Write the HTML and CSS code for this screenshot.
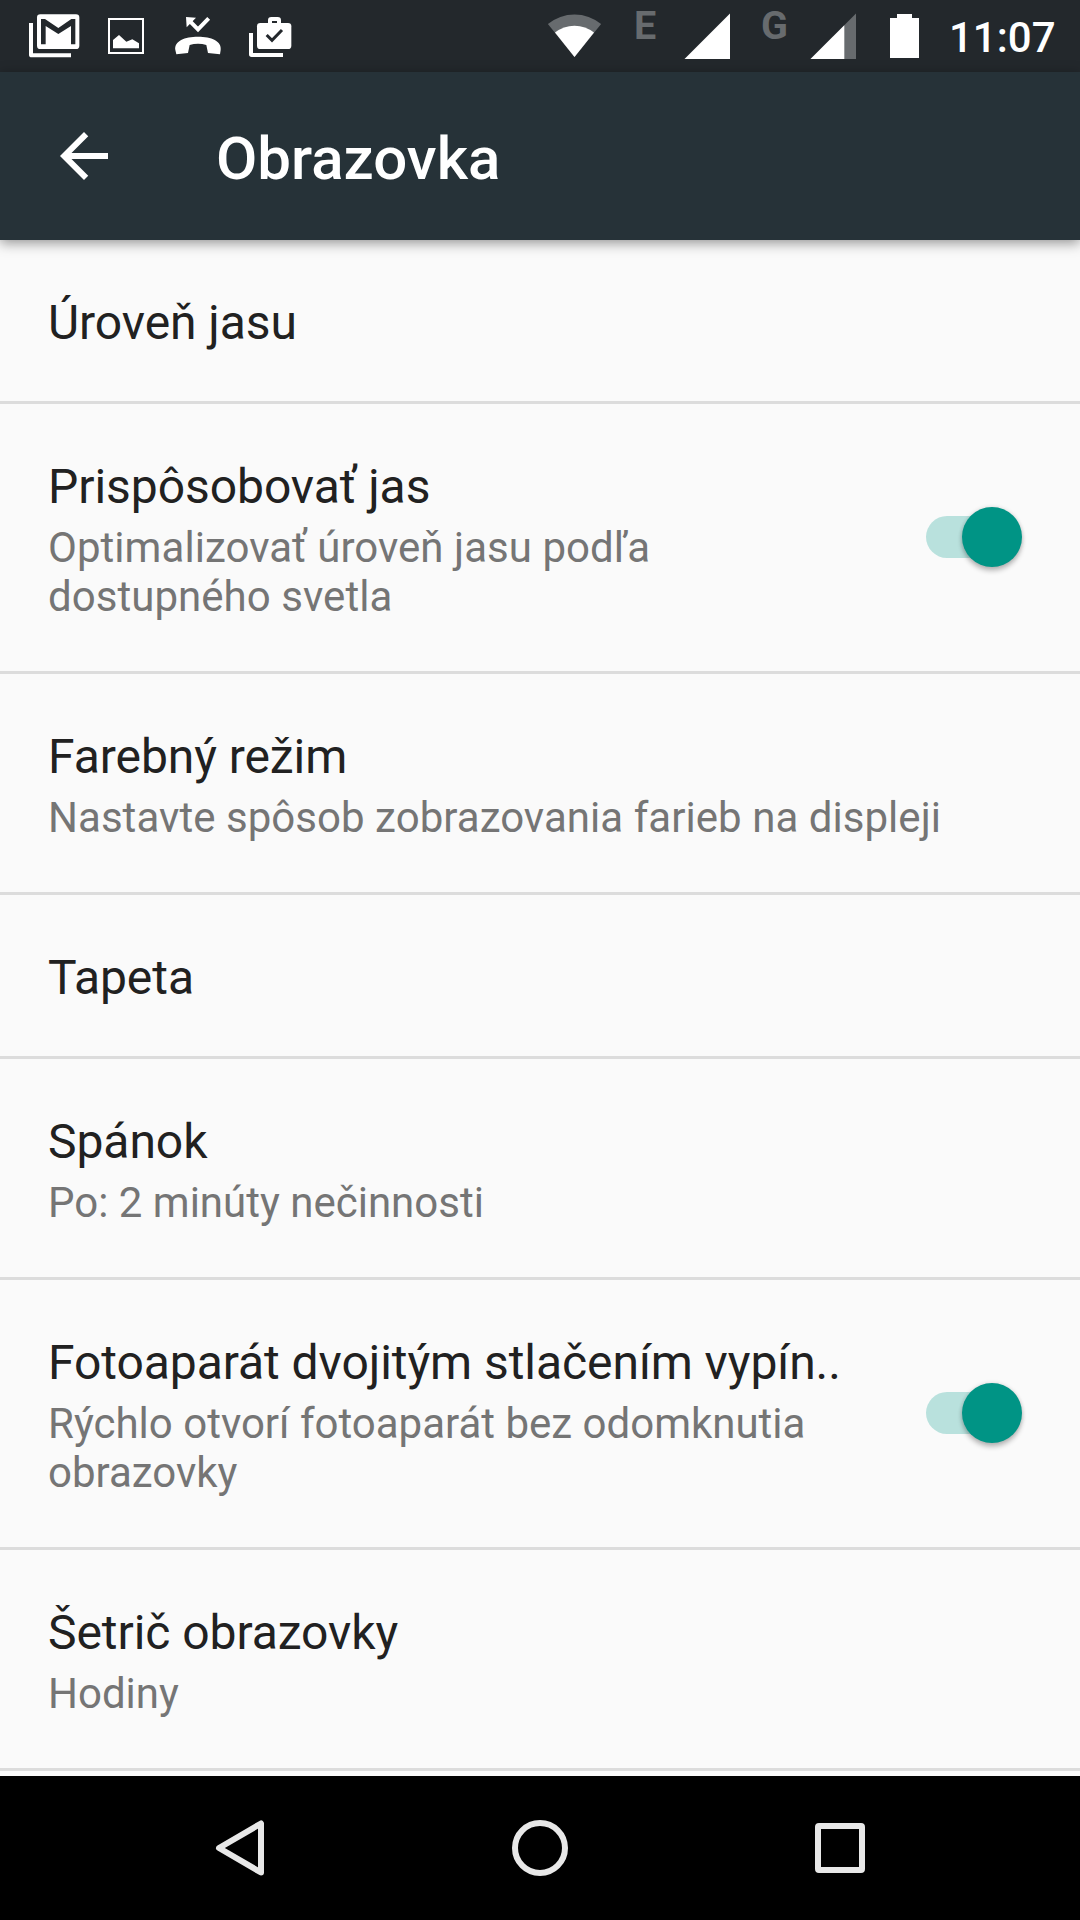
FILE: index.html
```html
<!DOCTYPE html>
<html lang="sk">
<head>
<meta charset="utf-8">
<title>Obrazovka</title>
<link rel="stylesheet" href="styles.css">
</head>
<body>
<header class="status">
  <div class="notifications">
    <svg class="note" viewBox="72 0 180 216"><path fill="#fff" d="M87 69h12v91h114v12H95q-8 0-8-8z"/><rect x="111" y="43" width="127" height="104" rx="10" fill="#fff"/><path fill="#23282c" d="M123 57h12l40 27 39-27h12v76h-13V78l-38 24-38-24v55h-14z"/></svg>
    <svg class="note" viewBox="288 0 180 216"><rect x="327" y="57" width="102" height="102" fill="none" stroke="#fff" stroke-width="6"/><path fill="#fff" d="M339 120l18-15 22 20 18-7 20 12v15h-78z"/></svg>
    <svg class="note" viewBox="504 0 180 216"><path fill="none" stroke="#fff" stroke-width="12" d="M568 62l26 26 32-33"/><path fill="#fff" d="M558 51l30 2-28 29zM526 150c-4-27 28-40 68-40s72 13 68 40l-2 13-36-4-5-24c-16-5-34-5-50 0l-5 24-35 4z"/></svg>
    <svg class="note" viewBox="720 0 180 216"><path fill="#fff" d="M747 99h12v60h90v12h-94q-8 0-8-8z"/><rect x="771" y="69" width="103" height="78" rx="10" fill="#fff"/><path fill="none" stroke="#fff" stroke-width="12" d="M810 72V61q0-4 4-4h19q4 0 4 4v11"/><path fill="none" stroke="#23282c" stroke-width="9" d="M800 105l16 16 30-31"/></svg>
  </div>
  <div class="system">
    <svg class="wifi" viewBox="547 0 55 72"><path fill="#676b6e" d="M547.9 24a42 42 0 0 1 53.2 0L574.5 57z"/><path fill="#fff" d="M555 32.6a31 31 0 0 1 39 0L574.5 57z"/></svg>
    <span class="network edge">E</span>
    <svg class="signal" viewBox="684 0 46 72"><path fill="#fff" d="M684.5 59L730 13.5V59z"/></svg>
    <span class="network gprs">G</span>
    <svg class="signal" viewBox="810 0 46 72"><path fill="#676b6e" d="M810.5 59L856 13.5V59z"/><path fill="#fff" d="M810.5 59L844.3 25.2V59z"/></svg>
    <svg class="battery" viewBox="890 0 29 72"><path fill="#fff" d="M890 18h7v-4h15v4h7v40h-29z"/></svg>
    <span class="clock">11:07</span>
  </div>
</header>
<div class="appbar">
  <svg class="back" viewBox="0 0 24 24"><path fill="#fff" d="M20 11H7.83l5.59-5.59L12 4l-8 8 8 8 1.41-1.41L7.83 13H20z"/></svg>
  <h1 class="heading">Obrazovka</h1>
</div>
<main class="list">
  <section class="row"><div class="text"><div class="title">Úroveň jasu</div></div></section>
  <section class="row"><div class="text"><div class="title">Prispôsobovať jas</div><div class="summary loose">Optimalizovať úroveň jasu podľa<br>dostupného svetla</div></div><div class="switch"><span class="thumb"></span></div></section>
  <section class="row"><div class="text"><div class="title">Farebný režim</div><div class="summary loose">Nastavte spôsob zobrazovania farieb na displeji</div></div></section>
  <section class="row"><div class="text"><div class="title">Tapeta</div></div></section>
  <section class="row"><div class="text"><div class="title">Spánok</div><div class="summary">Po: 2 minúty nečinnosti</div></div></section>
  <section class="row"><div class="text"><div class="title">Fotoaparát dvojitým stlačením vypín..</div><div class="summary">Rýchlo otvorí fotoaparát bez odomknutia<br>obrazovky</div></div><div class="switch"><span class="thumb"></span></div></section>
  <section class="row"><div class="text"><div class="title">Šetrič obrazovky</div><div class="summary">Hodiny</div></div></section>
</main>
<nav class="navbar">
  <svg class="key" viewBox="0 0 60 60"><path d="M51 5.5v49L9 30z"/></svg>
  <svg class="key" viewBox="0 0 60 60"><circle cx="30" cy="30" r="25"/></svg>
  <svg class="key" viewBox="0 0 60 60"><rect x="8" y="8" width="44" height="44" rx="1"/></svg>
</nav>
</body>
</html>
```
FILE: styles.css
```css
* { box-sizing: border-box; }
body {
  margin: 0;
  width: 1080px;
  height: 1920px;
  overflow: hidden;
  display: flex;
  flex-direction: column;
  background: #fafafa;
  font-family: Roboto, sans-serif;
}
svg { display: block; flex: none; }

.status {
  height: 72px;
  flex: none;
  display: flex;
  justify-content: space-between;
  background: #23282c;
  color: #fff;
}
.notifications { display: flex; gap: 12px; padding-left: 24px; }
.note { width: 60px; height: 72px; }
.system { display: flex; margin-right: 24px; }
.wifi { width: 55px; height: 72px; }
.signal { width: 46px; height: 72px; }
.battery { width: 29px; height: 72px; margin-left: 34px; }
.network {
  font-size: 39.5px;
  font-weight: 700;
  line-height: 46px;
  padding-top: 3px;
  color: #676b6e;
}
.edge { width: 82px; padding-left: 32px; }
.gprs { width: 80px; padding-left: 31px; }
.clock {
  width: 137px;
  padding: 13px 0 0 30px;
  font-size: 42px;
  font-weight: 500;
  line-height: 49px;
}

.appbar {
  height: 168px;
  flex: none;
  display: flex;
  align-items: center;
  gap: 96px;
  padding-left: 48px;
  background: #263238;
  color: #fff;
  box-shadow: 0 3px 12px rgba(0, 0, 0, .42);
}
.back { width: 72px; height: 72px; }
.heading {
  margin: 0;
  padding-top: 6px;
  font-size: 60px;
  font-weight: 500;
  line-height: 70px;
}

.list { height: 1536px; flex: none; overflow: hidden; }
.row {
  min-height: 164px;
  display: flex;
  align-items: center;
  justify-content: space-between;
  padding: 0 58px 0 48px;
  border-bottom: 3px solid #dcdcdc;
}
.text { align-self: flex-start; padding: 55px 0 50px; white-space: nowrap; }
.title { font-size: 48px; line-height: 56px; letter-spacing: -.06px; color: #212121; }
.summary { margin-top: 8px; font-size: 42px; line-height: 49px; color: #757575; }
.loose { letter-spacing: .045px; }
.switch {
  width: 96px;
  height: 42px;
  margin-bottom: 1px;
  flex: none;
  display: flex;
  align-items: center;
  justify-content: flex-end;
  border-radius: 21px;
  background: linear-gradient(#b9e1dd, #b9e1dd) left / 66px 42px no-repeat;
}
.thumb {
  width: 60px;
  height: 60px;
  flex: none;
  border-radius: 50%;
  background: #009485;
  box-shadow: 0 4px 5px rgba(0, 0, 0, .24), 0 0 4px rgba(0, 0, 0, .14);
}

.navbar {
  height: 144px;
  flex: none;
  display: flex;
  justify-content: center;
  align-items: center;
  gap: 240px;
  background: #000;
}
.key {
  width: 60px;
  height: 60px;
  fill: none;
  stroke: #e8e8e8;
  stroke-width: 6;
  stroke-linejoin: round;
}
```
